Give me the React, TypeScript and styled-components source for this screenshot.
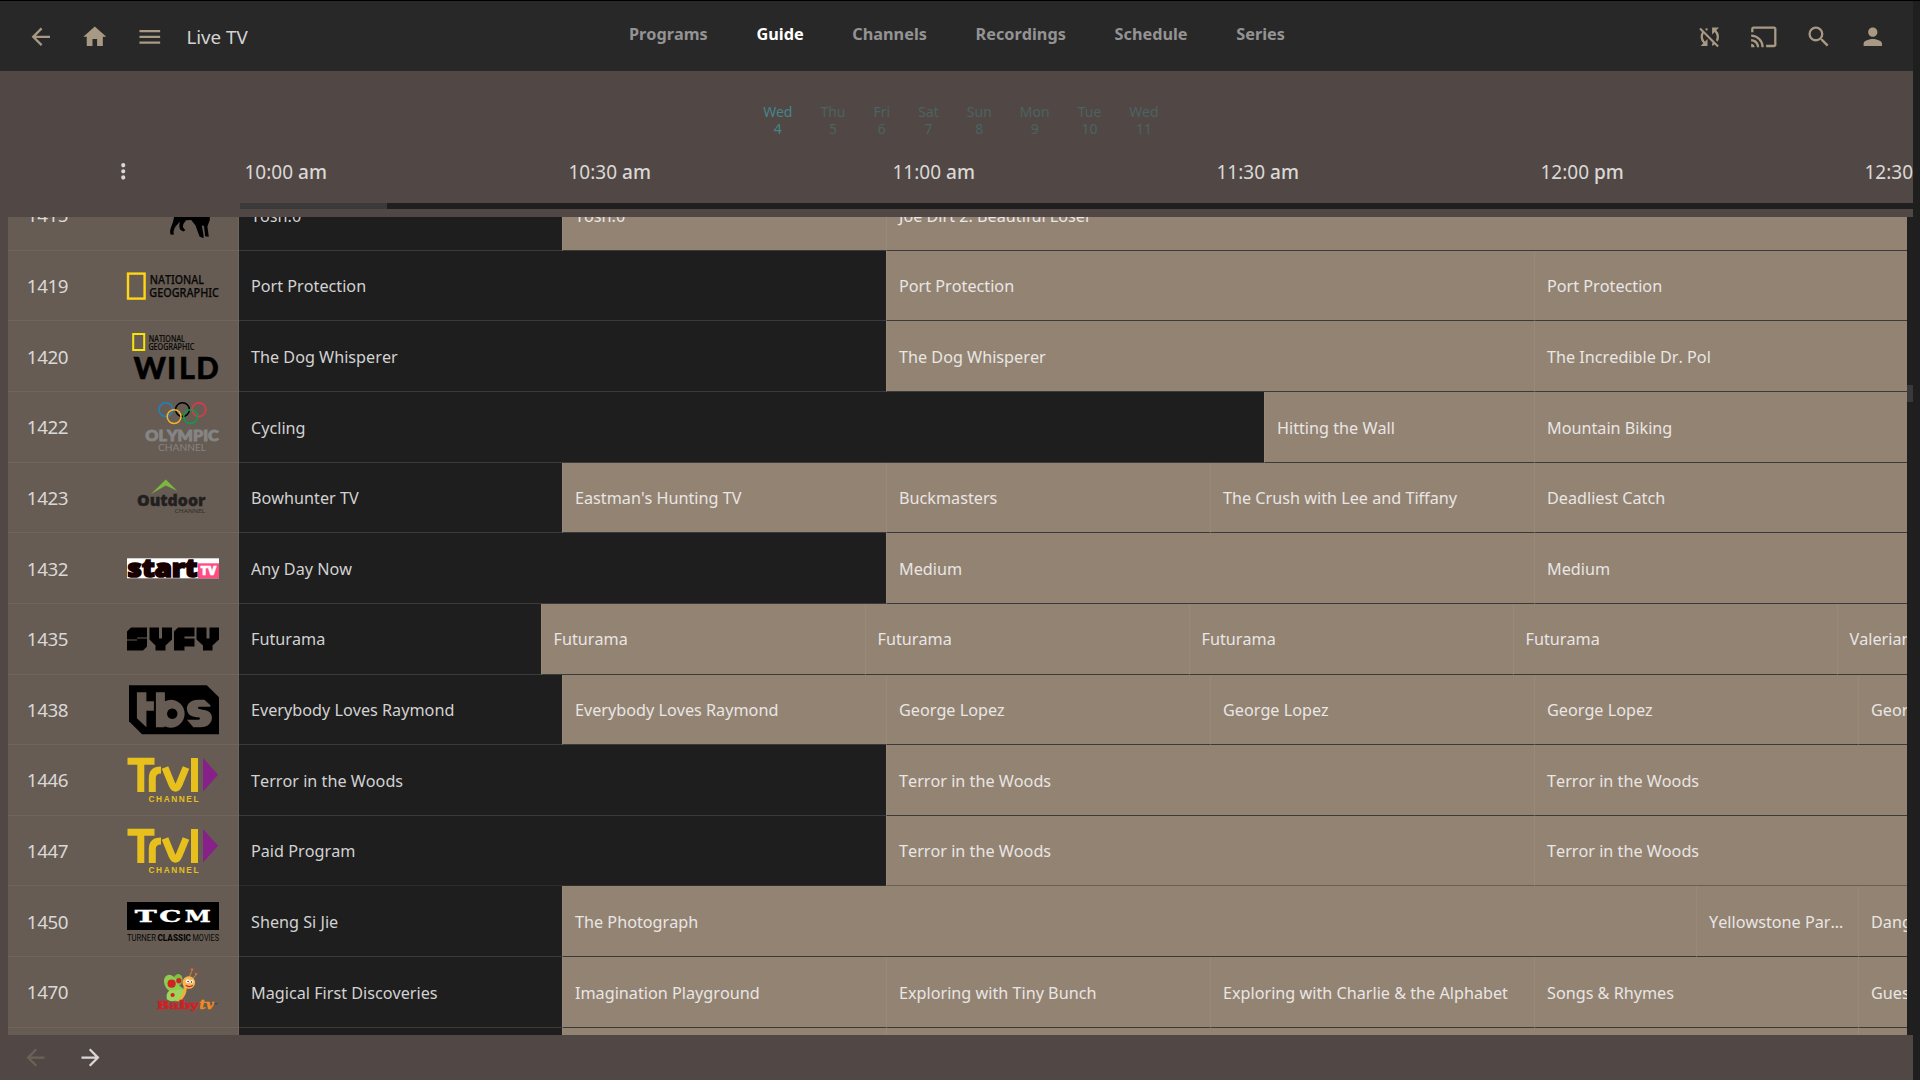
import React from 'react';
import styled, { createGlobalStyle } from 'styled-components';
import { MdArrowBack, MdArrowForward, MdCast, MdHome, MdMenu, MdMoreVert, MdPerson, MdSearch, MdSyncDisabled } from 'react-icons/md';

const PX_PER_MINUTE = 10.8;

const Global = createGlobalStyle`
  * { box-sizing: border-box; }
  body { margin: 0; background: #1f1f1f; overflow: hidden; }
`;

const Page = styled.div`
  width: 1920px;
  height: 1080px;
  overflow: hidden;
  background: #1f1f1f;
  border-top: 1px solid #000;
  padding-right: 7px;
  display: flex;
  flex-direction: column;
  font-family: 'Noto Sans', sans-serif;
  font-kerning: none;
  color: #dad8d7;
`;

const Header = styled.header`
  height: 70px;
  flex: none;
  background: #282828;
  display: grid;
  grid-template-columns: 629px 1fr 217.5px;
  color: #a89984;
`;

const HeaderLeft = styled.div`
  display: flex;
  align-items: center;
  padding: 1px 0 0 26.6px;
  svg { width: 27.6px; height: 27.6px; margin-right: 27px; }
`;

const Title = styled.h1`
  margin: 0 0 0 -4px;
  font-size: 18.8px;
  font-weight: 400;
  color: #d3d3d3;
`;

const Tabs = styled.nav`
  display: flex;
  gap: 48.7px;
  padding-top: 21px;
`;

const Tab = styled.span<{ $active?: boolean }>`
  font-size: 16.25px;
  line-height: 24px;
  font-weight: 700;
  color: ${p => (p.$active ? '#fff' : '#939393')};
`;

const HeaderRight = styled.div`
  display: flex;
  align-items: center;
  padding-top: 1px;
  gap: 27px;
  svg { width: 27.6px; height: 27.6px; }
`;

const Body = styled.main`
  flex: 1;
  min-height: 0;
  background: #514845;
  display: flex;
  flex-direction: column;
`;

const Days = styled.div`
  height: 76px;
  padding: 32px 0 0 763.2px;
  display: flex;
  gap: 28px;
  font-kerning: normal;
`;

const Day = styled.div<{ $active?: boolean }>`
  font-size: 14px;
  line-height: 17.3px;
  text-align: center;
  color: ${p => (p.$active ? '#458588' : '#4b6361')};
`;

const TimeBar = styled.div`
  height: 56px;
  display: flex;
  overflow: hidden;
  line-height: 50px;
`;

const MenuCell = styled.div`
  width: 238px;
  flex: none;
  padding: 11.6px 0 0 111px;
  line-height: 0;
  svg { width: 24.5px; height: 24.5px; }
`;

const Time = styled.div`
  width: 324px;
  flex: none;
  padding-left: 6.5px;
  font-size: 19px;
  white-space: pre;
  span { font-weight: 550; }
`;

const Track = styled.div`
  height: 6px;
  margin: 0 0 8px 240px;
  background: #1f1f1f;
`;

const Thumb = styled.div`
  width: 147px;
  height: 6px;
  background: #393a39;
`;

const Viewport = styled.div`
  height: 818px;
  flex: none;
  margin-right: -7px;
  background: #1f1f1f;
  display: flex;
  overflow: hidden;
  border-left: 8px solid #514845;
`;

const Rows = styled.div`
  width: 1899px;
  flex: none;
  margin-top: -36.875px;
  overflow: hidden;
`;

const Row = styled.div`
  height: 70.625px;
  display: flex;
`;

const Channel = styled.div`
  width: 231px;
  flex: none;
  background: #665c53;
  border-bottom: 1px solid #6f655b;
  border-right: 1px solid #6f655b;
  display: flex;
  align-items: center;
  justify-content: space-between;
  padding: 0 19px 0 18.8px;
`;

const ChannelNumber = styled.span`
  padding-top: 1px;
  font-size: 18.8px;
  letter-spacing: -0.4px;
`;

const LogoArt = styled.svg`
  display: block;
  width: 93px;
  height: 60px;
  overflow: visible;
  flex: none;
`;

const Programs = styled.div`
  display: flex;
  flex: none;
  width: 1668px;
  overflow: hidden;
`;

const Program = styled.div<{ $now?: boolean; $min: number; $soft?: boolean }>`
  width: ${p => p.$min * PX_PER_MINUTE - (p.$now ? 1 : 0)}px;
  flex: none;
  padding: 0.5px 12px 0;
  background: ${p => (p.$now ? '#1e1e1e' : '#938373')};
  border-bottom: 1px solid ${p => (p.$soft ? 'rgba(60, 60, 60, 0.5)' : '#3a3a3a')};
  border-left: ${p => (p.$now ? '0' : '1px solid #998979')};
  font-size: 16.2px;
  line-height: 71px;
  color: ${p => (p.$now ? '#d2d2d2' : '#e9e6e3')};
  white-space: nowrap;
  overflow: hidden;
  text-overflow: ellipsis;
`;

const Scroll = styled.div`
  padding-top: 168px;
  width: 6px;
`;

const ScrollThumb = styled.div`
  height: 17px;
  background: #393939;
`;

const Footer = styled.footer`
  flex: 1;
  display: flex;
  align-items: flex-start;
  padding: 8.5px 0 0 21.7px;
  gap: 28px;
  svg { display: block; width: 27px; height: 27px; }
`;

const Faded = styled.span`
  color: #6c6156;
`;

const F = 'Noto Sans, sans-serif';

function Logo({ id }: { id: string }) {
  switch (id) {
    case '1415':
      return (
        <LogoArt viewBox="0 0 93 60">
          <path d="M48.5 30 L47 37 L44.6 43.5 Q43.6 47 44.6 49.6 L47.8 49.8 L47.5 46.8 Q48 43 50 41 L54 36.4 Q52.6 41 54.2 44.8 L57.5 46.5 L59.3 45.2 L57 42.2 Q56.6 39 60 35.2 L65.2 35 L69.5 40.6 L73.5 51.6 L77.5 53.2 L77.6 50.4 L75.8 40.6 L78 41 L79.2 51.2 L82.8 51.8 L81.4 41.5 L83.8 35 V30 Z" fill="#000" />
        </LogoArt>
      );
    case '1419':
      return (
        <LogoArt viewBox="0 0 93 60" fontFamily={F}>
          <rect x="2" y="17.6" width="16.6" height="25" fill="none" stroke="#ffd515" strokeWidth="2.4" />
          <g fill="#080808" stroke="#080808" strokeWidth=".25" fontSize="12.9" fontWeight="500">
            <text x="23.8" y="28.3" textLength="54.2" lengthAdjust="spacingAndGlyphs">NATIONAL</text>
            <text x="23.3" y="40.8" textLength="69.7" lengthAdjust="spacingAndGlyphs">GEOGRAPHIC</text>
          </g>
        </LogoArt>
      );
    case '1420':
      return (
        <LogoArt viewBox="0 0 93 60" fontFamily={F}>
          <rect x="7.2" y="8" width="11" height="16" fill="none" stroke="#f7e40b" strokeWidth="2" />
          <g fill="#080808" stroke="#080808" strokeWidth=".15" fontSize="8.5" fontWeight="500">
            <text x="22.8" y="15.5" textLength="36" lengthAdjust="spacingAndGlyphs">NATIONAL</text>
            <text x="22.4" y="23.7" textLength="46" lengthAdjust="spacingAndGlyphs">GEOGRAPHIC</text>
          </g>
          <g fill="#000" stroke="#000" strokeWidth=".5" fontFamily="Lato, sans-serif" fontSize="30.5" fontWeight="900">
            <text x="7.5" y="52.6" textLength="32.5" lengthAdjust="spacingAndGlyphs">W</text>
            <text x="41" y="52.6">I</text>
            <text x="53" y="52.6">L</text>
            <text x="70.2" y="52.6" textLength="22.5" lengthAdjust="spacingAndGlyphs">D</text>
          </g>
        </LogoArt>
      );
    case '1422':
      return (
        <LogoArt viewBox="0 0 93 60" fontFamily="Lato, sans-serif">
          <g fill="none" strokeWidth="1.5">
            <circle cx="39.9" cy="12.6" r="6.9" stroke="#1c84c0" />
            <circle cx="56.5" cy="12.6" r="6.9" stroke="#000" />
            <circle cx="72.9" cy="12.6" r="6.9" stroke="#e8354c" />
            <circle cx="48.1" cy="19.6" r="6.9" stroke="#f8b32e" />
            <circle cx="64.6" cy="19.6" r="6.9" stroke="#0a9f4c" />
          </g>
          <text x="19.3" y="43.6" fill="#858585" stroke="#858585" strokeWidth=".9" fontSize="14.6" fontWeight="900" textLength="73.5" lengthAdjust="spacingAndGlyphs">OLYMPIC</text>
          <text x="32" y="53.8" fill="#858585" fontSize="9.8" textLength="48" lengthAdjust="spacingAndGlyphs">CHANNEL</text>
        </LogoArt>
      );
    case '1423':
      return (
        <LogoArt viewBox="0 0 93 60">
          <path d="M25 27 L39.8 12.5 L51.3 24 L39.8 18.5 Z" fill="#7cb83e" />
          <text x="11" y="39" fill="#231f20" stroke="#231f20" strokeWidth=".4" fontFamily={F} fontSize="16" fontWeight="900" textLength="68.5" lengthAdjust="spacingAndGlyphs">Outdoor</text>
          <text x="48.6" y="45.8" fill="#302c2a" fontFamily={F} fontSize="6" textLength="30.5" lengthAdjust="spacingAndGlyphs">CHANNEL</text>
        </LogoArt>
      );
    case '1432':
      return (
        <LogoArt viewBox="0 0 93 60" fontFamily={F} fontWeight="900">
          <rect x="1" y="20.3" width="92" height="20" fill="#fff" />
          <rect x="72" y="25.3" width="21" height="15" fill="#ff4d83" />
          <text x="1.6" y="39.4" fill="#180000" stroke="#180000" strokeWidth="1.7" fontSize="25" textLength="70" lengthAdjust="spacingAndGlyphs">start</text>
          <text x="74.5" y="37.2" fill="#fff" stroke="#fff" strokeWidth=".5" fontSize="12" textLength="16" lengthAdjust="spacingAndGlyphs">TV</text>
        </LogoArt>
      );
    case '1435':
      return (
        <LogoArt viewBox="0 0 93 60" fill="#000">
          <path d="M5 18.5 H21 V28.5 H11 V29.5 H21 V37.5 L17 41.5 H1 V31.5 H11 V30.5 H1 V22.5 Z" />
          <path d="M23.5 18.5 H33 V29.5 H36 V18.5 H46 V30.5 L39.5 36.5 V41.5 H29.5 V36.5 L23.5 30.5 Z" />
          <path d="M52 18.5 H68.5 V27.5 H58.5 V29.5 H68.5 V37.5 H58.5 V41.5 H48 V22.5 Z" />
          <path d="M70.5 18.5 H80.5 V29.5 H83.5 V18.5 H93 V30.5 L86.5 36.5 V41.5 H77 V36.5 L70.5 30.5 Z" />
        </LogoArt>
      );
    case '1438':
      return (
        <LogoArt viewBox="0 0 93 60">
          <path d="M3 6.3 H80.8 L93 18.3 V55.3 H16 L3 42.3 Z" fill="#000" />
          <g fill="#665c53" transform="translate(.4 .3)">
            <path d="M10.5 13 H20 V22 H27.5 V31.5 H20 V48 L10.5 39 Z" />
            <path fillRule="evenodd" d="M29.5 13 H38.5 V22 Q41 20.5 45 20.5 A14 14 0 1 1 38 47 V48 H29.5 Z M45.8 29.3 A5.2 5.2 0 1 0 45.9 29.3 Z" />
            <path d="M84 26 L78 20.5 H72 C64 20.5 60 25 60.5 30 C61 36 66 38 72 38 C74 38 74 40.5 72 40.5 H60.5 L67 48 H74 C82 48 86 43 85.5 37.5 C85 32 80 31 74 30 C70.5 29.5 71 27.5 73.5 27.5 H84 Z" />
          </g>
        </LogoArt>
      );
    case '1446':
    case '1447':
      return (
        <LogoArt viewBox="0 0 93 60">
          <g fill="none" stroke="#e7c01e" strokeWidth="7">
            <path d="M1.5 11.3 H28.5 M14.8 11 V42" />
            <path d="M26.3 42 V28 Q26.3 20 35 20" />
            <path d="M39 17.5 L46.2 35 Q49.5 41.5 52.8 35 L60 17.5" />
            <path d="M68.5 8 V42" />
          </g>
          <path d="M77 8 V41.5 L92 24.7 Z" fill="#88208a" />
          <text x="22.5" y="52" fill="#e7c01e" fontFamily="Liberation Sans, sans-serif" fontSize="8.3" fontWeight="700" textLength="50" lengthAdjust="spacing">CHANNEL</text>
        </LogoArt>
      );
    case '1450':
      return (
        <LogoArt viewBox="0 0 93 60">
          <rect x="1" y="11" width="92" height="28" fill="#000" />
          <g fill="#fff" stroke="#fff" strokeWidth=".4" fontFamily="DejaVu Serif, serif" fontSize="16.4" fontWeight="700">
            <text x="8.8" y="31.2" textLength="22" lengthAdjust="spacingAndGlyphs">T</text>
            <text x="33.2" y="31.2" textLength="22" lengthAdjust="spacingAndGlyphs">C</text>
            <text x="58.8" y="31.2" textLength="26" lengthAdjust="spacingAndGlyphs">M</text>
          </g>
          <g fill="#080808" fontFamily="Roboto, sans-serif" fontSize="8.8">
            <text x="1" y="49.8" textLength="29" lengthAdjust="spacingAndGlyphs">TURNER</text>
            <text x="31.5" y="49.8" fontWeight="900" textLength="33.5" lengthAdjust="spacingAndGlyphs">CLASSIC</text>
            <text x="66.5" y="49.8" textLength="26.5" lengthAdjust="spacingAndGlyphs">MOVIES</text>
          </g>
        </LogoArt>
      );
    case '1470':
      return (
        <LogoArt viewBox="0 0 93 60">
          <g transform="translate(.8 1.2)">
            <path d="M61.5 16 L65 8 M64.5 17 L69 12" stroke="#d08a35" strokeWidth="1" fill="none" />
            <circle cx="65.2" cy="6.5" r="1.4" fill="#d9682e" />
            <circle cx="69.2" cy="10.8" r="1.3" fill="#d9682e" />
            <path d="M57 22 Q57 31 48 38 L53 38 Q60 33 60 24" fill="#f7a93b" />
            <ellipse cx="51" cy="17" rx="4.6" ry="6.2" fill="#7cc242" transform="rotate(15 51 17)" />
            <ellipse cx="44" cy="20" rx="6.4" ry="8.8" fill="#8dcc4f" transform="rotate(-24 44 20)" />
            <path d="M40 36 Q38 27 47 26 Q54 25 57 26 Q57 31 52 36 Q45 40 40 36" fill="#9fd35c" />
            <path d="M45 27 L51 21 L57 26 Z" fill="#8dcc4f" />
            <circle cx="44.8" cy="20.5" r="4.1" fill="#d12026" />
            <circle cx="52" cy="17.5" r="2.6" fill="#d12026" />
            <circle cx="45.8" cy="31.8" r="2.1" fill="#d12026" />
            <circle cx="62" cy="19.3" r="6.3" fill="#f9b552" />
            <circle cx="61" cy="18" r="2" fill="#fff" />
            <circle cx="65" cy="18.5" r="1.7" fill="#fff" />
            <circle cx="61.3" cy="18.3" r=".7" fill="#111" />
            <circle cx="64.8" cy="18.8" r=".7" fill="#111" />
            <path d="M59 22 Q63 25 66 22" stroke="#c3272b" strokeWidth="1.2" fill="none" />
            <text x="30" y="46" fill="#d12026" stroke="#d12026" strokeWidth=".6" fontFamily="DejaVu Serif, serif" fontSize="11.5" fontWeight="700" textLength="42" lengthAdjust="spacingAndGlyphs">Baby</text>
            <text x="72.5" y="46" fill="#f28b22" stroke="#f28b22" strokeWidth=".4" fontFamily="DejaVu Serif, serif" fontSize="12" fontWeight="700" fontStyle="italic" textLength="14.5" lengthAdjust="spacingAndGlyphs">tv</text>
            <path d="M87.5 40.5 H91" stroke="#4b443e" strokeWidth="1.2" />
          </g>
        </LogoArt>
      );
    default:
      return null;
  }
}

type Show = [string, number];

const channels: { id: string; soft?: boolean; shows: Show[] }[] = [
  { id: '1415', shows: [['Tosh.0', 30], ['Tosh.0', 30], ['Joe Dirt 2: Beautiful Loser', 120]] },
  { id: '1419', shows: [['Port Protection', 60], ['Port Protection', 60], ['Port Protection', 60]] },
  { id: '1420', shows: [['The Dog Whisperer', 60], ['The Dog Whisperer', 60], ['The Incredible Dr. Pol', 60]] },
  { id: '1422', shows: [['Cycling', 95], ['Hitting the Wall', 25], ['Mountain Biking', 60]] },
  { id: '1423', shows: [['Bowhunter TV', 30], ["Eastman's Hunting TV", 30], ['Buckmasters', 30], ['The Crush with Lee and Tiffany', 30], ['Deadliest Catch', 60]] },
  { id: '1432', shows: [['Any Day Now', 60], ['Medium', 60], ['Medium', 60]] },
  { id: '1435', shows: [['Futurama', 28.0], ['Futurama', 30], ['Futurama', 30], ['Futurama', 30], ['Futurama', 30], ['Valerian', 60]].map(([n, m], i) => [n, i === 0 ? 28.01 : m] as Show) },
  { id: '1438', shows: [['Everybody Loves Raymond', 30], ['Everybody Loves Raymond', 30], ['George Lopez', 30], ['George Lopez', 30], ['George Lopez', 30], ['George Lopez', 30]] },
  { id: '1446', shows: [['Terror in the Woods', 60], ['Terror in the Woods', 60], ['Terror in the Woods', 60]] },
  { id: '1447', soft: true, shows: [['Paid Program', 60], ['Terror in the Woods', 60], ['Terror in the Woods', 60]] },
  { id: '1450', shows: [['Sheng Si Jie', 30], ['The Photograph', 105], ['Yellowstone Park: Nature', 15], ['Dangerous', 60]] },
  { id: '1470', shows: [['Magical First Discoveries', 30], ['Imagination Playground', 30], ['Exploring with Tiny Bunch', 30], ['Exploring with Charlie & the Alphabet', 30], ['Songs & Rhymes', 30], ['Guess', 30]] },
  { id: '', shows: [['', 30], ['', 30], ['', 90], ['', 30]] },
];

const days = ['Wed 4', 'Thu 5', 'Fri 6', 'Sat 7', 'Sun 8', 'Mon 9', 'Tue 10', 'Wed 11'];
const times = ['10:00 am', '10:30 am', '11:00 am', '11:30 am', '12:00 pm', '12:30 pm'];
const tabs = ['Programs', 'Guide', 'Channels', 'Recordings', 'Schedule', 'Series'];

export default function App() {
  return (
    <Page>
      <Global />
      <Header>
        <HeaderLeft>
          <MdArrowBack /><MdHome /><MdMenu />
          <Title>Live TV</Title>
        </HeaderLeft>
        <Tabs>{tabs.map(t => <Tab key={t} $active={t === 'Guide'}>{t}</Tab>)}</Tabs>
        <HeaderRight><MdSyncDisabled /><MdCast /><MdSearch /><MdPerson /></HeaderRight>
      </Header>
      <Body>
        <Days>
          {days.map((d, i) => {
            const [name, num] = d.split(' ');
            return <Day key={d} $active={i === 0}>{name}<br />{num}</Day>;
          })}
        </Days>
        <TimeBar>
          <MenuCell><MdMoreVert /></MenuCell>
          {times.map(t => <Time key={t}>{t.slice(0, 6)}<span>{t.slice(6)}</span></Time>)}
        </TimeBar>
        <Track><Thumb /></Track>
        <Viewport>
          <Rows>
            {channels.map((c, i) => (
              <Row key={i}>
                <Channel><ChannelNumber>{c.id}</ChannelNumber><Logo id={c.id} /></Channel>
                <Programs>
                  {c.shows.map(([name, min], j) => (
                    <Program key={j} $now={j === 0} $min={min} $soft={c.soft}>{name}</Program>
                  ))}
                </Programs>
              </Row>
            ))}
          </Rows>
          <Scroll><ScrollThumb /></Scroll>
        </Viewport>
        <Footer><Faded><MdArrowBack /></Faded><MdArrowForward /></Footer>
      </Body>
    </Page>
  );
}
